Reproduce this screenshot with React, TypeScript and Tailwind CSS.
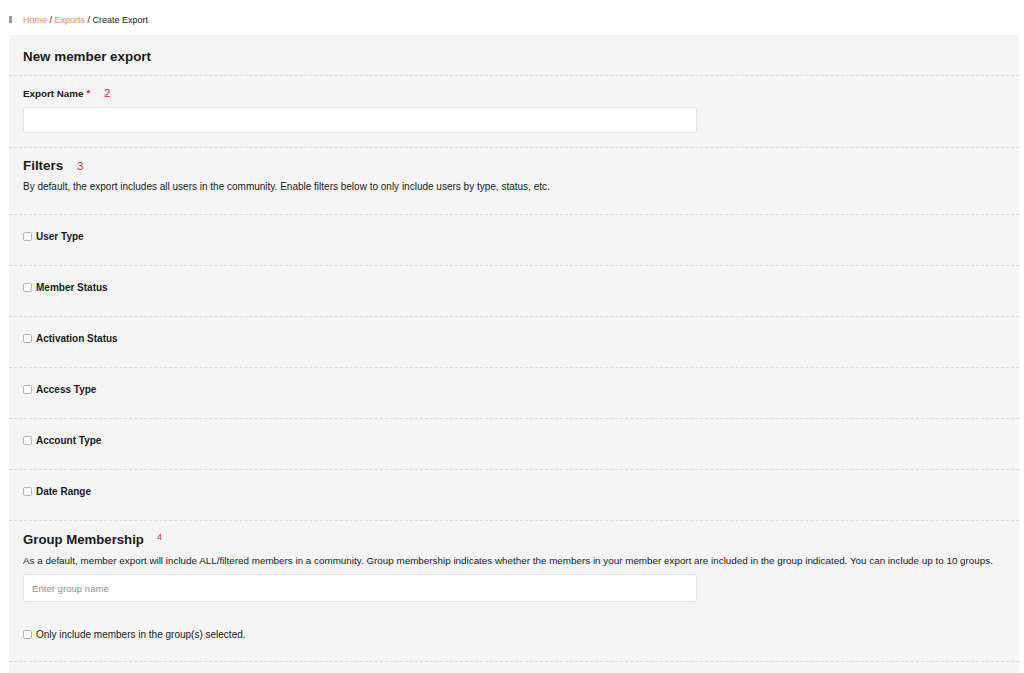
import { type ReactNode } from 'react'

const filters = ['User Type', 'Member Status', 'Activation Status', 'Access Type', 'Account Type', 'Date Range']

function Box() {
  return <span className="mt-[1px] inline-block h-[9px] w-[9px] shrink-0 rounded-[2px] border border-[#b5b5b5] bg-white" />
}

function Section({ children, className = '' }: { children: ReactNode; className?: string }) {
  return <div className={`border-b border-dashed border-[#dcdcdc] px-[14px] ${className}`}>{children}</div>
}

export default function App() {
  return (
    <div className="min-h-screen bg-white text-[#1b1b1b]" style={{ fontFamily: '"Liberation Sans", Arial, sans-serif' }}>
      <div className="flex h-[35px] items-start pl-[9px] pt-[15px]">
        <span className="mr-[11px] mt-[1px] h-[7px] w-[3px] bg-[#9a9a9a]" />
        <div className="text-[9px] leading-[10px]">
          <span className="text-[#e8875c]">Home</span>
          <span> / </span>
          <span className="text-[#e8875c]">Exports</span>
          <span> / Create Export</span>
        </div>
      </div>

      <div className="ml-[9px] w-[1010px] bg-[#f4f4f4] pb-[20px]">
        <Section className="flex h-[41px] items-center pt-[4px]">
          <h1 className="text-[13.4px] font-bold leading-[16px]">New member export</h1>
        </Section>

        <Section className="pt-[12px] pb-[14px]">
          <div className="flex items-center text-[9.8px] font-bold leading-[12px]">
            Export Name
            <span className="ml-[3px] -mt-[3px] text-[#e0262b]">*</span>
            <span className="ml-[14px] -mt-[2px] text-[11px] font-normal text-[#e0262b]">2</span>
          </div>
          <input className="mt-[7px] block h-[26px] w-[674px] rounded-[2px] border border-[#e4e4e4] bg-white px-[9px] text-[10px] outline-none" />
        </Section>

        <Section className="pt-[10px] pb-[21px]">
          <div className="flex items-center text-[13.4px] font-bold leading-[16px]">
            Filters
            <span className="ml-[14px] text-[11px] font-normal text-[#e0262b]">3</span>
          </div>
          <p className="mt-[7px] text-[10px] leading-[12px]">
            By default, the export includes all users in the community. Enable filters below to only include users by type, status, etc.
          </p>
        </Section>

        {filters.map((f) => (
          <Section key={f} className="h-[51px] pt-[16px]">
            <label className="flex items-start gap-[4px] text-[10px] font-bold leading-[12px]">
              <Box />
              {f}
            </label>
          </Section>
        ))}

        <Section className="pt-[11px] pb-[20px]">
          <div className="flex items-center text-[13.2px] font-bold leading-[16px]">
            Group Membership
            <span className="ml-[13px] -mt-[6px] text-[9px] font-normal text-[#e0262b]">4</span>
          </div>
          <p className="mt-[7px] whitespace-nowrap text-[9.85px] leading-[12px]">
            As a default, member export will include ALL/filtered members in a community. Group membership indicates whether the members in your member export are included in the group indicated. You can include up to 10 groups.
          </p>
          <input
            placeholder="Enter group name"
            className="mt-[7px] block h-[28px] w-[674px] rounded-[2px] border border-[#e4e4e4] bg-white px-[8px] text-[9.6px] outline-none placeholder:text-[#8f8f8f]"
          />
          <label className="mt-[27px] flex items-start gap-[4px] text-[10px] leading-[12px]">
            <Box />
            Only include members in the group(s) selected.
          </label>
        </Section>
      </div>
    </div>
  )
}
